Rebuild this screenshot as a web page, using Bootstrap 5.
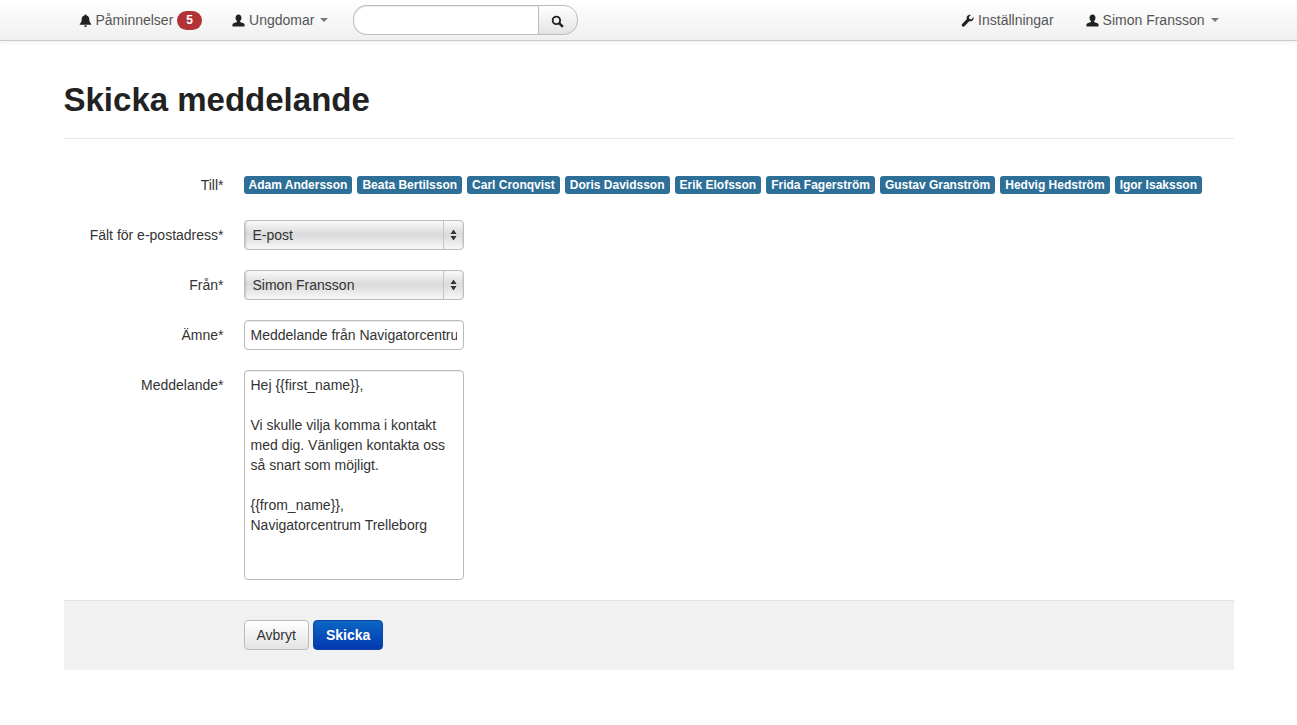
<!DOCTYPE html>
<html lang="sv">
<head>
  <meta charset="UTF-8" />
  <title>Skicka meddelande</title>
  <link href="https://cdn.jsdelivr.net/npm/bootstrap@5.3.3/dist/css/bootstrap.min.css" rel="stylesheet" />
  <style>
    body {
      font-family: "Liberation Sans", Arial, sans-serif;
      font-size: 14px;
      line-height: 20px;
      color: #333;
      background: #fff;
    }

    /* top bar */
    .topbar {
      height: 41px;
      background: linear-gradient(to bottom, #fff, #f0f0f0);
      border-bottom: 1px solid #ccc;
      box-shadow: 0 1px 5px rgba(0, 0, 0, 0.07);
    }
    .page-wrap {
      width: 1170px;
      margin: 0 auto;
    }
    .topbar .page-wrap {
      height: 40px;
      transform: translateX(0);
    }
    .top-link {
      display: flex;
      align-items: center;
      gap: 4px;
      height: 40px;
      padding: 0 15px;
      color: #555;
      text-decoration: none;
      white-space: nowrap;
    }
    .top-link svg { flex: none; fill: #222; }
    .top-caret {
      width: 0;
      height: 0;
      margin-left: 2px;
      border-top: 4px solid #777;
      border-left: 4px solid transparent;
      border-right: 4px solid transparent;
    }
    .count-pill {
      margin-left: 0;
      padding: 0 9px;
      height: 19px;
      line-height: 19px;
      border-radius: 10px;
      background: #b13337;
      color: #fff;
      font-size: 12px;
      font-weight: 700;
    }
    .top-search {
      width: 225px;
      height: 30px;
      margin-left: 10px;
    }
    .top-search input {
      width: 185px;
      height: 30px;
      border: 1px solid #bbb;
      border-right: 0;
      border-radius: 14px 0 0 14px;
      outline: 0;
      padding: 0 10px;
      box-shadow: inset 0 1px 1px rgba(0, 0, 0, 0.075);
    }
    .top-search button {
      width: 40px;
      height: 30px;
      padding: 0 2px 0 0;
      border: 1px solid #bbb;
      border-radius: 0 14px 14px 0;
      background: linear-gradient(to bottom, #fff, #e4e4e4);
    }

    /* heading */
    .page-title {
      height: 98px;
      padding-top: 39px;
      margin-bottom: 34px;
      border-bottom: 1px solid #e6e6e6;
    }
    .page-title h1 {
      margin: 0;
      font-size: 33px;
      line-height: 40px;
      font-weight: 700;
      color: #222;
    }

    /* form */
    .form-line {
      display: flex;
      margin-bottom: 20px;
    }
    .line-label {
      width: 160px;
      margin-right: 20px;
      padding-top: 5px;
      text-align: right;
      color: #333;
    }
    .line-field { width: 220px; }
    .to-line { margin-bottom: 25px; padding-top: 2px; }
    .to-line .line-label { padding-top: 0; height: 20px; line-height: 20px; }
    .to-names { display: flex; gap: 5px; white-space: nowrap; margin-top: 1px; }
    .to-name {
      height: 18px;
      padding: 0 5px;
      border-radius: 3px;
      background: #2e6f98;
      color: #fff;
      font-size: 12px;
      line-height: 18px;
      font-weight: 700;
    }
    .mac-select.form-select {
      display: block;
      width: 220px;
      height: 30px;
      padding: 0 24px 0 8px;
      font-size: 14px;
      line-height: 28px;
      color: #333;
      border: 1px solid #bdbdbd;
      border-radius: 4px;
      box-shadow: inset 2px 0 2px -1px rgba(0, 0, 0, 0.15), inset -1px 0 1px rgba(0, 0, 0, 0.05);
      background-color: #e6e6e6;
      background-image:
        url("data:image/svg+xml,%3Csvg xmlns='http://www.w3.org/2000/svg' width='20' height='28'%3E%3Cpath d='M0 0h1v28H0z' fill='%23c4c4c4'/%3E%3Cpath d='M10.5 8.5l3 4.500h-6zM10.500 19.500l3-4.500h-6z' fill='%23333'/%3E%3C/svg%3E"),
        linear-gradient(to bottom, #fafafa 0, #dcdcdc 45%, #e0e0e0 60%, #f8f8f8 100%);
      background-repeat: no-repeat;
      background-position: right 0 center, 0 0;
      background-size: 20px 28px, auto;
    }
    .plain-field.form-control {
      width: 220px;
      padding: 4px 6px;
      font-size: 14px;
      line-height: 20px;
      color: #333;
      border: 1px solid #bbb;
      border-radius: 4px;
      box-shadow: inset 0 1px 1px rgba(0, 0, 0, 0.075);
    }
    input.plain-field.form-control { height: 30px; }
    textarea.plain-field.form-control { height: 210px; resize: none; }
    .form-foot {
      height: 70px;
      padding: 19px 0 0 180px;
      background: #f1f1f1;
      border-top: 1px solid #e2e2e2;
    }
    .foot-btn {
      height: 30px;
      padding: 0 12px;
      font-size: 14px;
      line-height: 28px;
      border-radius: 4px;
    }
    .foot-btn.cancel-btn {
      color: #333;
      border: 1px solid #bbb;
      background: linear-gradient(to bottom, #fff, #e3e3e3);
    }
    .foot-btn.send-btn {
      color: #fff;
      font-weight: 700;
      border: 1px solid #0a45a8;
      background: linear-gradient(to bottom, #0b67c4, #0338b0);
    }
  </style>
</head>
<body>
  <!-- Navbar -->
  <nav class="topbar">
    <div class="page-wrap d-flex align-items-center">
      <a class="top-link" href="#">
        <svg width="13" height="13" viewBox="0 0 14 14"><path d="M7 0.500c.7 0 1.100.5 1.100 1 2 .5 3 2 3 4.200 0 2.500.8 3.800 2.100 5.100v.7H.800v-.7C2.100 9.500 2.900 8.200 2.900 5.700c0-2.200 1-3.700 3-4.200 0-.5.4-1 1.100-1zM5.400 12.300h3.200c0 1-.7 1.600-1.600 1.600s-1.600-.6-1.600-1.600z"/></svg>
        Påminnelser
        <span class="count-pill">5</span>
      </a>
      <a class="top-link" href="#">
        <svg width="13" height="13" viewBox="0 0 14 14"><path d="M7 .500c2 0 3.200 1.500 3.200 3.500 0 1.500-.6 2.800-1.500 3.500v1.200c2 .6 4.300 1.400 4.800 2.300v2.500H.500V11c.5-.9 2.800-1.700 4.800-2.300V7.500C4.400 6.800 3.800 5.500 3.800 4 3.800 2 5 .500 7 .500z"/></svg>
        Ungdomar
        <span class="top-caret"></span>
      </a>
      <form class="top-search d-flex" onsubmit="return false">
        <input type="text" aria-label="Sök" />
        <button type="submit" aria-label="Sök">
          <svg width="13" height="13" viewBox="0 0 14 14" fill="none" stroke="#222"><circle cx="5.800" cy="5.800" r="4" stroke-width="2"/><path d="M8.800 8.800l4 4" stroke-width="2.600"/></svg>
        </button>
      </form>
      <a class="top-link ms-auto" href="#" style="padding-right:17px">
        <svg width="13" height="13" viewBox="0 0 14 14"><path d="M13.500 3.300c.3 1.500-.1 2.800-1.100 3.700-1 .9-2.200 1.100-3.500.7l-5.200 5.500c-.7.700-1.700.7-2.400 0-.7-.7-.7-1.700 0-2.400L6.300 5.500c-.4-1.300-.2-2.500.7-3.500C8 1 9.300.500 10.800.800L8.500 3.200l.5 2.200 2.200.5z"/></svg>
        Inställningar
      </a>
      <a class="top-link" href="#">
        <svg width="13" height="13" viewBox="0 0 14 14"><path d="M7 .500c2 0 3.200 1.500 3.200 3.500 0 1.500-.6 2.800-1.500 3.500v1.200c2 .6 4.300 1.400 4.800 2.300v2.500H.500V11c.5-.9 2.800-1.700 4.800-2.300V7.500C4.400 6.800 3.800 5.500 3.800 4 3.800 2 5 .500 7 .500z"/></svg>
        Simon Fransson
        <span class="top-caret"></span>
      </a>
    </div>
  </nav>

  <!-- Main Content -->
  <main class="page-wrap">
    <div class="page-title">
      <h1>Skicka meddelande</h1>
    </div>

    <form onsubmit="return false">
      <div class="form-line to-line">
        <div class="line-label">Till*</div>
        <div class="to-names">
          <span class="to-name">Adam Andersson</span>
          <span class="to-name">Beata Bertilsson</span>
          <span class="to-name">Carl Cronqvist</span>
          <span class="to-name">Doris Davidsson</span>
          <span class="to-name">Erik Elofsson</span>
          <span class="to-name">Frida Fagerström</span>
          <span class="to-name">Gustav Granström</span>
          <span class="to-name">Hedvig Hedström</span>
          <span class="to-name">Igor Isaksson</span>
        </div>
      </div>
      <div class="form-line">
        <label class="line-label">Fält för e-postadress*</label>
        <div class="line-field">
          <select class="form-select mac-select"><option>E-post</option></select>
        </div>
      </div>
      <div class="form-line">
        <label class="line-label">Från*</label>
        <div class="line-field">
          <select class="form-select mac-select"><option>Simon Fransson</option></select>
        </div>
      </div>
      <div class="form-line">
        <label class="line-label">Ämne*</label>
        <div class="line-field">
          <input class="form-control plain-field" type="text" value="Meddelande från Navigatorcentrum Trelleborg" />
        </div>
      </div>
      <div class="form-line">
        <label class="line-label">Meddelande*</label>
        <div class="line-field">
          <textarea class="form-control plain-field">Hej {{first_name}},

Vi skulle vilja komma i kontakt med dig. Vänligen kontakta oss så snart som möjligt.

{{from_name}},
Navigatorcentrum Trelleborg</textarea>
        </div>
      </div>
      <div class="form-foot d-flex gap-1 align-items-start">
        <button class="btn foot-btn cancel-btn" type="button">Avbryt</button>
        <button class="btn foot-btn send-btn" type="submit">Skicka</button>
      </div>
    </form>
  </main>

  <script src="https://cdn.jsdelivr.net/npm/bootstrap@5.3.3/dist/js/bootstrap.bundle.min.js"></script>
</body>
</html>
